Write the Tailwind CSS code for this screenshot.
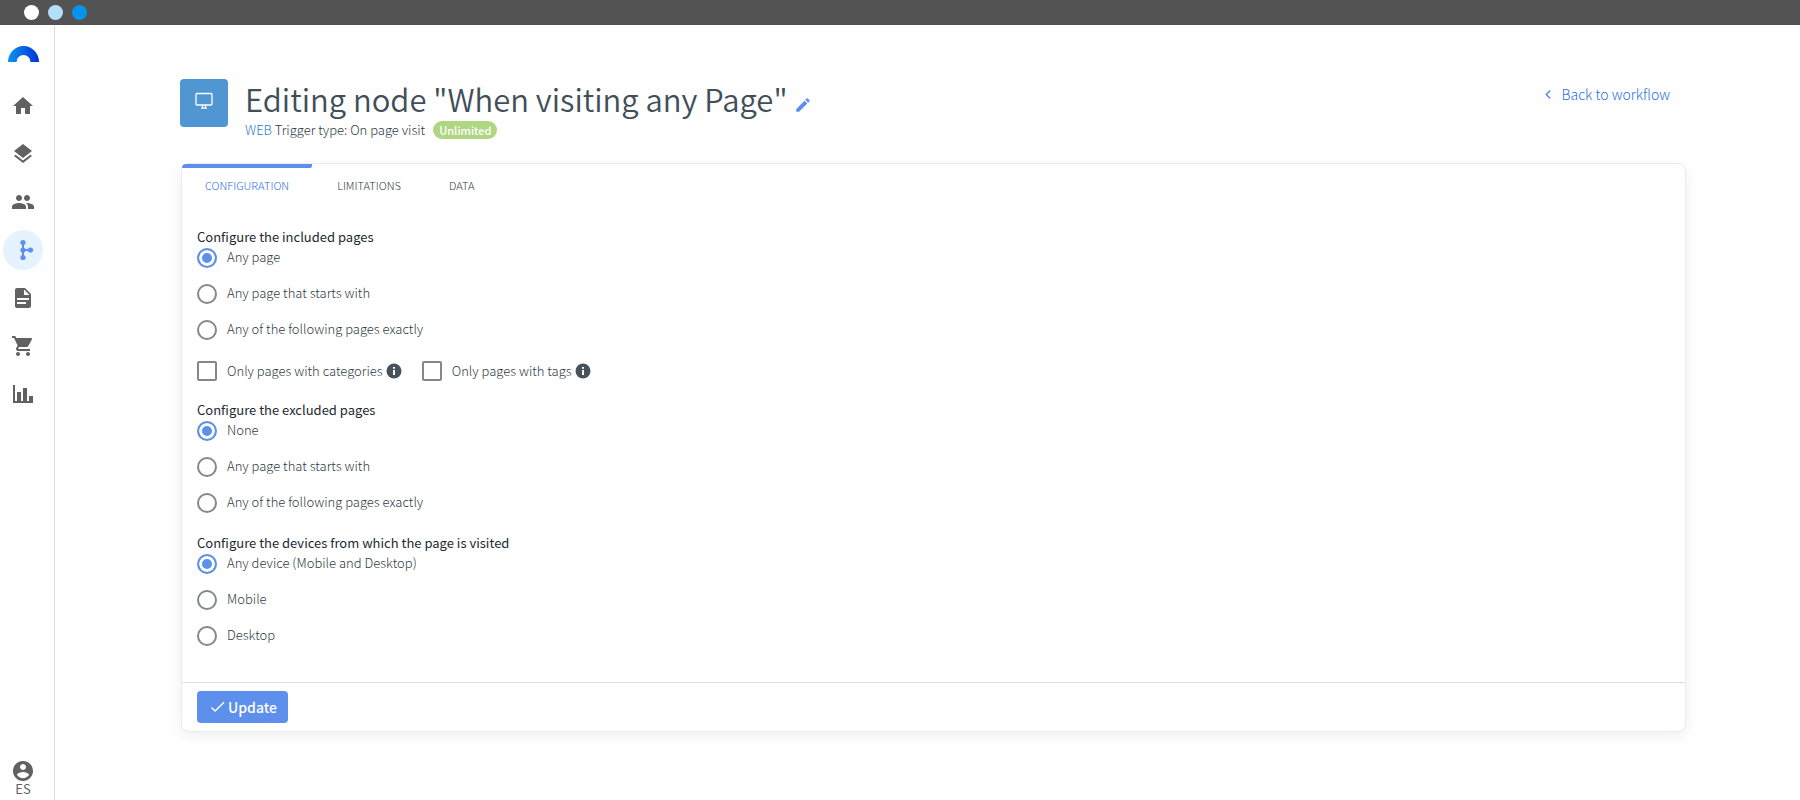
<!DOCTYPE html>
<html lang="en">
<head>
    <meta charset="UTF-8">
    <meta name="viewport" content="width=device-width, initial-scale=1.0">
    <title>Editing node</title>
    <script src="https://cdn.jsdelivr.net/npm/@tailwindcss/browser@4"></script>
</head>
<body class="min-h-screen flex flex-col bg-[#fefefe] font-['Noto_Sans_CJK_SC',sans-serif] text-[13px] leading-5 text-[#2f3b45] font-light">
    <!-- Top bar -->
    <div class="h-[25px] bg-[#535353] flex items-center gap-[9px] pl-6">
        <span class="size-[15px] rounded-full bg-white"></span>
        <span class="size-[15px] rounded-full bg-[#b3dffb]"></span>
        <span class="size-[15px] rounded-full bg-[#0693ea]"></span>
    </div>

    <div class="flex flex-1 pt-px">
        <!-- Sidebar -->
        <nav class="w-[55px] border-r border-[#dcdcdc] flex flex-col items-start pl-[3px] text-[#616161]">
            <a href="#" aria-label="Start" class="w-10 h-[60px] flex justify-center pt-5">
                <svg class="w-[31px] h-4" viewBox="0 0 31 16">
                    <defs>
                        <linearGradient id="arc" x1="0" y1="0" x2="1" y2="0">
                            <stop offset="0" stop-color="#0a96ec"/>
                            <stop offset="1" stop-color="#0131d8"/>
                        </linearGradient>
                    </defs>
                    <path fill="url(#arc)" d="M0 16a15.500 16 0 0 1 31 0h-8.500a7 7 0 0 0-14 0z"/>
                </svg>
            </a>
            <div class="flex flex-col gap-2">
                <a href="#" aria-label="Home" class="size-10 rounded-full flex items-center justify-center">
                    <svg class="size-6" viewBox="0 0 24 24" fill="currentColor"><path d="M10 20v-6h4v6h5v-8h3L12 3 2 12h3v8z"/></svg>
                </a>
                <a href="#" aria-label="Layers" class="size-10 rounded-full flex items-center justify-center">
                    <svg class="size-6" viewBox="0 0 24 24" fill="currentColor"><path d="M11.990 18.540l-7.370-5.730L3 14.070l9 7 9-7-1.630-1.270-7.380 5.740zM12 16l7.360-5.730L21 9l-9-7-9 7 1.630 1.270L12 16z"/></svg>
                </a>
                <a href="#" aria-label="People" class="size-10 rounded-full flex items-center justify-center">
                    <svg class="size-6" viewBox="0 0 24 24" fill="currentColor"><path d="M16 11c1.660 0 2.990-1.340 2.990-3S17.660 5 16 5s-3 1.340-3 3 1.340 3 3 3zm-8 0c1.660 0 2.990-1.340 2.990-3S9.660 5 8 5 5 6.340 5 8s1.340 3 3 3zm0 2c-2.330 0-7 1.170-7 3.500V19h14v-2.500c0-2.330-4.670-3.500-7-3.500zm8 0c-.29 0-.62.020-.97.050 1.160.84 1.970 1.970 1.970 3.450V19h6v-2.500c0-2.330-4.670-3.500-7-3.500z"/></svg>
                </a>
                <a href="#" aria-label="Workflows" class="size-10 rounded-full bg-[#e6f3ff] text-[#5d90ec] flex items-center justify-center">
                    <svg class="size-6" viewBox="0 0 24 24" fill="currentColor"><path d="M11 4h2v16h-2zM12 11h8v2h-8z"/><circle cx="12" cy="4.500" r="2.600"/><circle cx="12" cy="12" r="2.600"/><circle cx="12" cy="19.500" r="2.600"/><circle cx="19.500" cy="12" r="2.600"/></svg>
                </a>
                <a href="#" aria-label="Documents" class="size-10 rounded-full flex items-center justify-center">
                    <svg class="size-6" viewBox="0 0 24 24" fill="currentColor"><path d="M14 2H6c-1.100 0-1.990.9-1.990 2L4 20c0 1.100.89 2 1.990 2H18c1.100 0 2-.9 2-2V8l-6-6zm1 16H6v-2h9v2zm3-4H6v-2h12v2zm-5-5V3.500L18.500 9H13z"/></svg>
                </a>
                <a href="#" aria-label="Shop" class="size-10 rounded-full flex items-center justify-center">
                    <svg class="size-6" viewBox="0 0 24 24" fill="currentColor"><path d="M7 18c-1.100 0-1.990.9-1.990 2S5.900 22 7 22s2-.9 2-2-.9-2-2-2zM1 2v2h2l3.600 7.590-1.350 2.450c-.16.280-.25.610-.25.960 0 1.100.9 2 2 2h12v-2H7.420c-.14 0-.25-.11-.25-.25l.03-.12.900-1.630h7.450c.75 0 1.410-.41 1.750-1.030l3.580-6.490c.080-.14.120-.31.120-.48 0-.55-.45-1-1-1H5.210l-.94-2H1zm16 16c-1.100 0-1.990.9-1.990 2s.89 2 1.990 2 2-.9 2-2-.9-2-2-2z"/></svg>
                </a>
                <a href="#" aria-label="Statistics" class="size-10 rounded-full flex items-center justify-center">
                    <svg class="size-6" viewBox="0 0 24 24" fill="currentColor"><path d="M2 3h2v16h2v-9h4v9h2V6h4v13h2v-5h4v7H2z"/></svg>
                </a>
            </div>
            <div class="mt-auto w-10 flex flex-col items-center pb-[5px]">
                <a href="#" aria-label="Account">
                    <svg class="size-6" viewBox="0 0 24 24" fill="currentColor"><path d="M12 2C6.480 2 2 6.480 2 12s4.480 10 10 10 10-4.480 10-10S17.520 2 12 2zm0 3c1.660 0 3 1.340 3 3s-1.340 3-3 3-3-1.340-3-3 1.340-3 3-3zm0 14.200c-2.500 0-4.710-1.280-6-3.220.030-1.990 4-3.080 6-3.080 1.990 0 5.970 1.090 6 3.080-1.290 1.940-3.500 3.220-6 3.220z"/></svg>
                </a>
                <a href="#" class="leading-3 font-normal">ES</a>
            </div>
        </nav>

        <main class="flex-1 pl-[125px] pr-[114px] pt-[53px]">
            <!-- Header -->
            <header class="flex items-start h-[84px]">
                <div class="size-12 rounded bg-[#4f96d2] text-white flex justify-center pt-[13px]">
                    <svg class="size-[18px]" viewBox="0 0 18 18" fill="none" stroke="currentColor"><rect x="1" y="1.500" width="16" height="11.500" rx="1" stroke-width="1.300"/><path d="M7.500 13v3M10.500 13v3M6 16.200h6" stroke-width="1.200"/></svg>
                </div>
                <div class="pl-[17px]">
                    <div class="flex items-center h-[42px] pb-[2px]">
                        <h1 class="text-[31px] leading-10 font-[350] text-[#414e58]">Editing node "When visiting any Page"</h1>
                        <button type="button" aria-label="Rename" class="ml-[6px] mt-3 text-[#5d90ec]">
                            <svg class="size-[18px]" viewBox="0 0 24 24" fill="currentColor"><path d="M3 17.250V21h3.750L17.810 9.940l-3.750-3.750L3 17.250zM20.710 7.040c.39-.39.39-1.020 0-1.410l-2.340-2.340c-.39-.39-1.020-.39-1.410 0l-1.830 1.830 3.750 3.750 1.830-1.830z"/></svg>
                        </button>
                    </div>
                    <div class="flex items-center h-[18px]">
                        <p><span class="text-[#2f80c6]">WEB</span> Trigger type: On page visit</p>
                        <span class="ml-2 px-[6px] h-[18px] rounded-full bg-[#afd682] text-white text-[11px] leading-[18px] font-medium">Unlimited</span>
                    </div>
                </div>
                <a href="#" class="ml-auto mr-4 mt-[5px] flex items-center gap-[10px] text-sm text-[#2f70e4]">
                    <svg class="w-[6px] h-[9px]" viewBox="0 0 6 9" fill="none" stroke="#5d90ec" stroke-width="1.500"><path d="M5.200.6L1.300 4.500l3.900 3.900"/></svg>
                    Back to workflow
                </a>
            </header>

            <!-- Card -->
            <section class="ml-px border border-[#ebebeb] rounded-lg bg-white shadow-[0_4px_12px_rgba(0,0,0,0.06)]">
                <div role="tablist" class="flex gap-[2px] text-[11px] leading-4">
                    <button type="button" role="tab" aria-selected="true" class="relative px-[23px] h-10 pt-[2px] text-[#2f70e4]">
                        <span class="absolute inset-x-0 top-0 h-1 bg-[#5d90ec] rounded-tl-lg rounded-br"></span>CONFIGURATION
                    </button>
                    <button type="button" role="tab" aria-selected="false" class="px-[23px] h-10 pt-[2px]">LIMITATIONS</button>
                    <button type="button" role="tab" aria-selected="false" class="px-[23px] h-10 pt-[2px]">DATA</button>
                </div>

                <form>
                    <div class="px-[15px] pt-6 pb-9">
                        <fieldset>
                            <legend class="font-normal leading-[18px] pb-[2px] text-[#1c2933]">Configure the included pages</legend>
                            <div class="flex flex-col items-start gap-4 leading-[18px]">
                                <label class="flex items-start gap-[10px]"><input type="radio" name="included" checked class="appearance-none size-5 rounded-full border-2 border-[#84888c] checked:border-[#5d90ec] checked:bg-[#5d90ec] checked:shadow-[inset_0_0_0_3px_white]">Any page</label>
                                <label class="flex items-start gap-[10px]"><input type="radio" name="included" class="appearance-none size-5 rounded-full border-2 border-[#84888c] checked:border-[#5d90ec] checked:bg-[#5d90ec] checked:shadow-[inset_0_0_0_3px_white]">Any page that starts with</label>
                                <label class="flex items-start gap-[10px]"><input type="radio" name="included" class="appearance-none size-5 rounded-full border-2 border-[#84888c] checked:border-[#5d90ec] checked:bg-[#5d90ec] checked:shadow-[inset_0_0_0_3px_white]">Any of the following pages exactly</label>
                            </div>
                        </fieldset>

                        <div class="flex gap-5 mt-[21px] mb-5">
                            <div class="flex items-center gap-[3px]">
                                <label class="flex items-center gap-[10px]"><input type="checkbox" class="appearance-none size-5 rounded-xs border-2 border-[#84888c] checked:bg-[#5d90ec]">Only pages with categories</label>
                                <svg class="size-4" viewBox="0 0 16 16"><circle cx="8" cy="8" r="7.500" fill="#47535c"/><path fill="#fff" d="M7 4h2v1.800H7zM7 7h2v5H7z"/></svg>
                            </div>
                            <div class="flex items-center gap-[3px]">
                                <label class="flex items-center gap-[10px]"><input type="checkbox" class="appearance-none size-5 rounded-xs border-2 border-[#84888c] checked:bg-[#5d90ec]">Only pages with tags</label>
                                <svg class="size-4" viewBox="0 0 16 16"><circle cx="8" cy="8" r="7.500" fill="#47535c"/><path fill="#fff" d="M7 4h2v1.800H7zM7 7h2v5H7z"/></svg>
                            </div>
                        </div>

                        <fieldset>
                            <legend class="font-normal leading-[18px] pb-[2px] text-[#1c2933]">Configure the excluded pages</legend>
                            <div class="flex flex-col items-start gap-4 leading-[18px]">
                                <label class="flex items-start gap-[10px]"><input type="radio" name="excluded" checked class="appearance-none size-5 rounded-full border-2 border-[#84888c] checked:border-[#5d90ec] checked:bg-[#5d90ec] checked:shadow-[inset_0_0_0_3px_white]">None</label>
                                <label class="flex items-start gap-[10px]"><input type="radio" name="excluded" class="appearance-none size-5 rounded-full border-2 border-[#84888c] checked:border-[#5d90ec] checked:bg-[#5d90ec] checked:shadow-[inset_0_0_0_3px_white]">Any page that starts with</label>
                                <label class="flex items-start gap-[10px]"><input type="radio" name="excluded" class="appearance-none size-5 rounded-full border-2 border-[#84888c] checked:border-[#5d90ec] checked:bg-[#5d90ec] checked:shadow-[inset_0_0_0_3px_white]">Any of the following pages exactly</label>
                            </div>
                        </fieldset>

                        <fieldset class="mt-[21px]">
                            <legend class="font-normal leading-[18px] pb-[2px] text-[#1c2933]">Configure the devices from which the page is visited</legend>
                            <div class="flex flex-col items-start gap-4 leading-[18px]">
                                <label class="flex items-start gap-[10px]"><input type="radio" name="device" checked class="appearance-none size-5 rounded-full border-2 border-[#84888c] checked:border-[#5d90ec] checked:bg-[#5d90ec] checked:shadow-[inset_0_0_0_3px_white]">Any device (Mobile and Desktop)</label>
                                <label class="flex items-start gap-[10px]"><input type="radio" name="device" class="appearance-none size-5 rounded-full border-2 border-[#84888c] checked:border-[#5d90ec] checked:bg-[#5d90ec] checked:shadow-[inset_0_0_0_3px_white]">Mobile</label>
                                <label class="flex items-start gap-[10px]"><input type="radio" name="device" class="appearance-none size-5 rounded-full border-2 border-[#84888c] checked:border-[#5d90ec] checked:bg-[#5d90ec] checked:shadow-[inset_0_0_0_3px_white]">Desktop</label>
                            </div>
                        </fieldset>
                    </div>

                    <div class="border-t border-[#e0e0e0] px-[15px] py-2">
                        <button type="submit" class="h-8 px-[11px] rounded bg-[#5d90ec] text-white text-sm font-medium flex items-center gap-[2px]">
                            <svg class="size-[18px]" viewBox="0 0 18 18" fill="none" stroke="currentColor" stroke-width="1.400"><path d="M3.500 9.500l3.600 3.600L16 4.200"/></svg>
                            Update
                        </button>
                    </div>
                </form>
            </section>
        </main>
    </div>
</body>
</html>
